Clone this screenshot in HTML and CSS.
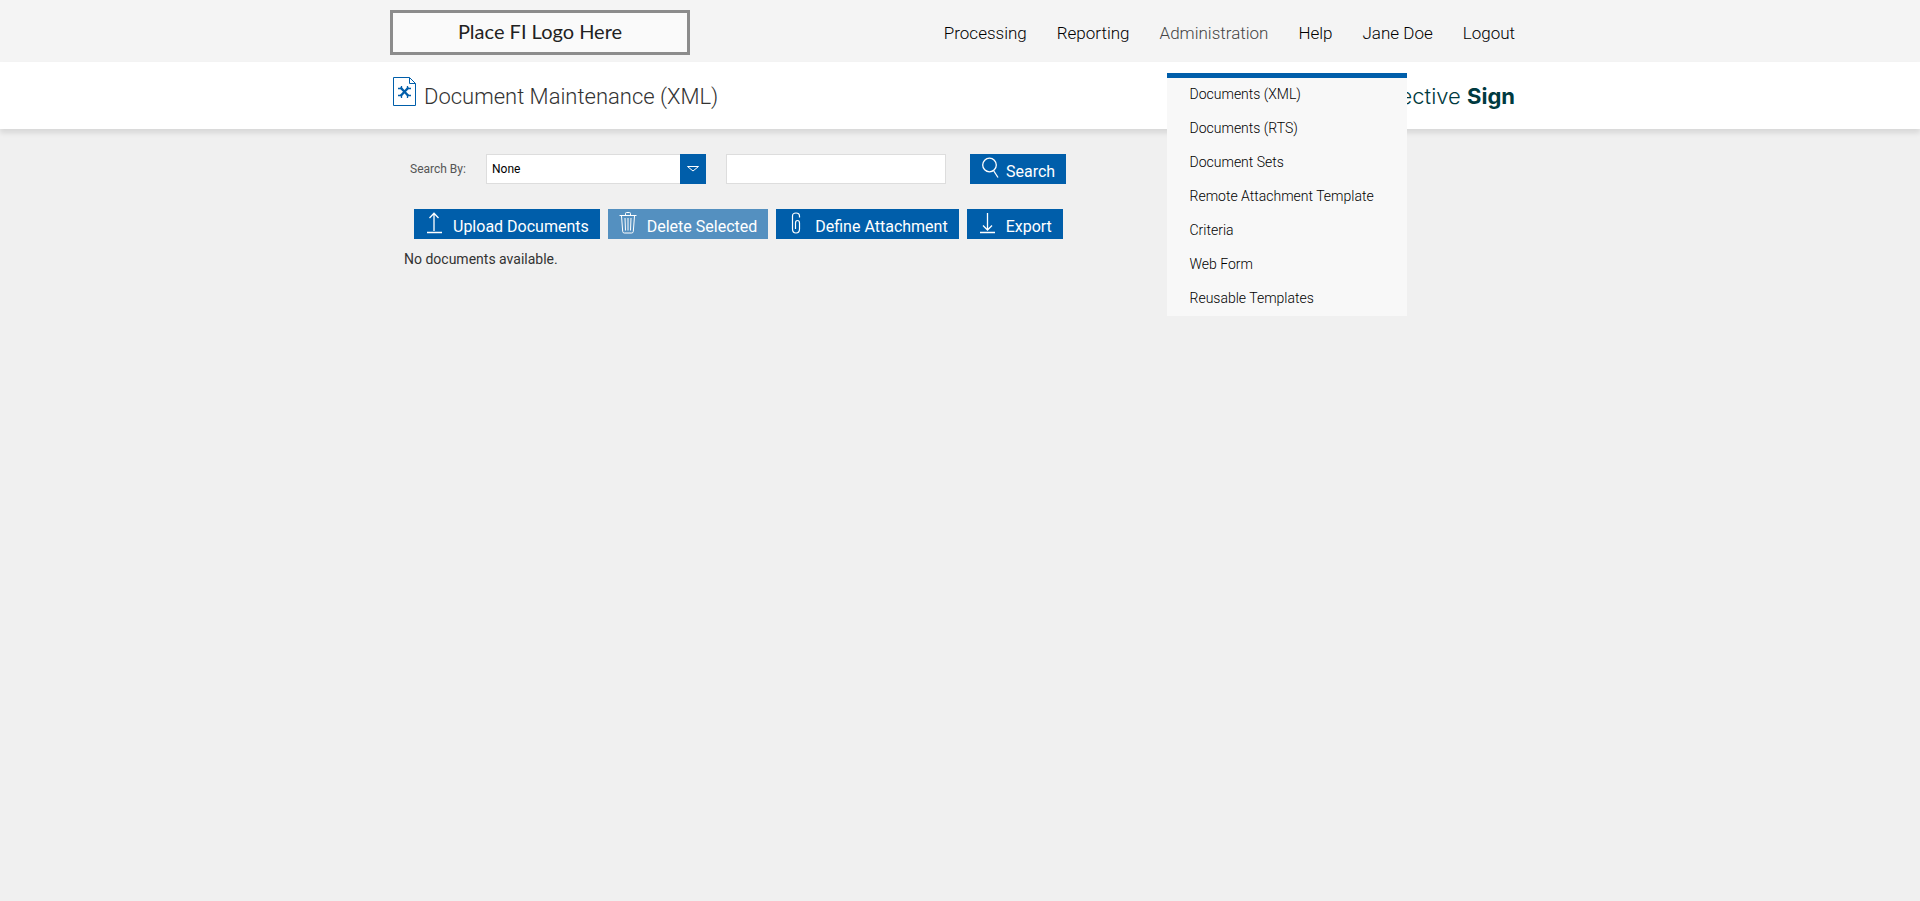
FILE: index.html
```html
<!DOCTYPE html>
<html lang="en">
<head>
    <meta charset="UTF-8">
    <meta name="viewport" content="width=device-width, initial-scale=1.0">
    <title>Document Maintenance (XML)</title>
    <link rel="stylesheet" href="styles.css">
</head>
<body>
    <!-- Top Bar -->
    <header class="top-bar">
        <div class="container top-inner">
            <a class="fi-logo" href="#">Place FI Logo Here</a>
            <nav class="main-nav">
                <a href="#">Processing</a>
                <a href="#">Reporting</a>
                <div class="nav-item">
                    <a class="active" href="#">Administration</a>
                    <!-- Administration Menu -->
                    <div class="dropdown">
                        <a href="#">Documents (XML)</a>
                        <a href="#">Documents (RTS)</a>
                        <a href="#">Document Sets</a>
                        <a href="#">Remote Attachment Template</a>
                        <a href="#">Criteria</a>
                        <a href="#">Web Form</a>
                        <a href="#">Reusable Templates</a>
                    </div>
                </div>
                <a href="#">Help</a>
                <a href="#">Jane Doe</a>
                <a href="#">Logout</a>
            </nav>
        </div>
    </header>

    <!-- Page Title -->
    <div class="title-bar">
        <div class="container title-inner">
            <svg class="title-icon" width="24" height="30" viewBox="0 0 24 30" fill="none" stroke="#005eaa">
                <path d="M.5.5h16l6 6v22h-22z"/>
                <path d="M16.500.5v6h6"/>
                <path d="M7.500 10.500l8 8.500M15.500 10.500l-8 8.500" stroke-width="2.400"/>
                <path d="M5 11.500h3.500V9M18 11.500h-3.500V9M5 18.500h3.500V21M18 18.500h-3.500V21" stroke-width="1.300"/>
            </svg>
            <h1>Document Maintenance (XML)</h1>
            <div class="brand">Kinective <strong>Sign</strong></div>
        </div>
    </div>

    <main class="container content">
        <!-- Search -->
        <form class="search-form">
            <label for="search-by">Search By:</label>
            <div class="select-box">
                <select id="search-by" name="search-by">
                    <option>None</option>
                </select>
                <span class="select-arrow">
                    <svg width="14" height="6" viewBox="0 0 14 6" fill="none" stroke="#fff"><path d="M1.500.5h11L7 5z"/></svg>
                </span>
            </div>
            <input type="text" name="search-text" aria-label="Search text">
            <button class="btn btn-search" type="button">
                <svg width="18" height="22" viewBox="0 0 18 22" fill="none" stroke="#fff" stroke-width="1.300"><circle cx="8.500" cy="8" r="6.800"/><path d="M12.500 13.500l4.500 7"/></svg>
                Search
            </button>
        </form>

        <!-- Actions -->
        <div class="actions">
            <button class="btn" type="button">
                <svg width="18" height="22" viewBox="0 0 18 22" fill="none" stroke="#fff" stroke-width="1.300"><path d="M9 19V1.500M4.500 6L9 1.300 13.500 6M2 20.500h15"/></svg>
                Upload Documents
            </button>
            <button class="btn" type="button" disabled>
                <svg width="18" height="22" viewBox="0 0 18 22" fill="none" stroke="#fff"><path d="M.5 3.500h17M6.500 3.500v-2q0-1 1-1h3q1 0 1 1v2M2.500 4l1.200 15.500q.2 1.500 1.600 1.500h7.400q1.400 0 1.600-1.500L15.500 4M6 6l.5 12.500M9 6v12.500M12 6l-.5 12.500"/></svg>
                Delete Selected
            </button>
            <button class="btn" type="button">
                <svg width="18" height="22" viewBox="0 0 18 22" fill="none" stroke="#fff" stroke-width="1.200"><path d="M12.500 5.500V4q0-3-3.500-3T5.500 4v13q0 4 3.500 4t3.500-4V11q0-2.500-2-2.500T8.500 11v6"/></svg>
                Define Attachment
            </button>
            <button class="btn" type="button">
                <svg width="18" height="22" viewBox="0 0 18 22" fill="none" stroke="#fff" stroke-width="1.300"><path d="M9.500 1v16.500M5 13.500L9.500 18l4.500-4.500M2 20.500h15"/></svg>
                Export
            </button>
        </div>

        <p class="empty">No documents available.</p>
    </main>
</body>
</html>
```

FILE: styles.css
```css
/* Base Styles */
* {
    box-sizing: border-box;
}

body {
    min-height: 100vh;
    margin: 0;
    font-family: Roboto, sans-serif;
    font-size: 14px;
    color: #333;
    background-color: #f0f0f0;
}

a {
    color: #000;
    text-decoration: none;
}

.container {
    max-width: 1140px;
    margin: 0 auto;
}

/* Top Bar */
.top-bar {
    background-color: #f4f4f4;
}

.top-inner {
    display: flex;
    justify-content: space-between;
    align-items: center;
    height: 62px;
    padding: 0 15px 0 0;
}

.fi-logo {
    width: 300px;
    height: 45px;
    margin-top: 3px;
    border: 3px solid #8c8c8c;
    background-color: #fafafa;
    color: #222;
    font-family: Lato, sans-serif;
    font-size: 20px;
    line-height: 37px;
    text-align: center;
}

.main-nav {
    display: flex;
    gap: 30px;
    padding-top: 4px;
    font-size: 17px;
    font-weight: 300;
    line-height: 24px;
}

.main-nav .active {
    color: #444;
}

.nav-item {
    position: relative;
}

/* Dropdown */
.dropdown {
    position: absolute;
    top: 52px;
    left: 7px;
    z-index: 10;
    width: 240px;
    border-top: 5px solid #005eaa;
    background-color: #f8f8f8;
    font-size: 14px;
}

.dropdown a {
    display: block;
    padding: 0 23px 2px;
    line-height: 32px;
}

/* Page Title */
.title-bar {
    background-color: #fff;
    box-shadow: 0 4px 5px rgba(0, 0, 0, 0.1);
}

.title-inner {
    display: flex;
    align-items: center;
    height: 67px;
    padding: 0 15px 0 3px;
}

.title-icon {
    margin-bottom: 8px;
}

h1 {
    margin: 0;
    padding: 2px 0 0 7px;
    color: #333;
    font-size: 22px;
    font-weight: 300;
}

.brand {
    margin-left: auto;
    color: #003a40;
    font-family: Inter, sans-serif;
    font-size: 22px;
    font-weight: 300;
}

.brand strong {
    font-weight: 700;
}

/* Search */
.content {
    padding-top: 25px;
}

.search-form {
    display: flex;
    align-items: center;
    padding-left: 20px;
}

.search-form label {
    width: 76px;
    color: #555;
    font-size: 12px;
}

.select-box {
    display: flex;
    width: 220px;
    height: 30px;
    position: relative;
}

.select-box select,
.search-form input {
    width: 220px;
    height: 30px;
    padding: 0 5px;
    border: 1px solid #ddd;
    border-radius: 0;
    background-color: #fff;
    color: #000;
    font-family: inherit;
    font-size: 12px;
    appearance: none;
}

.search-form input {
    margin: 0 24px 0 20px;
}

.select-arrow {
    position: absolute;
    top: 0;
    right: 0;
    display: flex;
    align-items: center;
    justify-content: center;
    width: 26px;
    height: 30px;
    background-color: #005eaa;
    pointer-events: none;
}

/* Buttons */
.btn {
    display: flex;
    align-items: center;
    gap: 10px;
    height: 30px;
    padding: 4px 11px 0;
    border: none;
    background-color: #005eaa;
    color: #fff;
    font-family: inherit;
    font-size: 16px;
    font-weight: 400;
    white-space: nowrap;
    cursor: pointer;
}

.btn svg {
    margin-bottom: 6px;
}

.btn-search {
    gap: 7px;
}

.btn:disabled {
    background-color: #5490c0;
    cursor: default;
}

.actions {
    display: flex;
    gap: 8px;
    padding: 25px 0 0 24px;
}

.empty {
    margin: 12px 0 0 14px;
    line-height: 16px;
}
```
